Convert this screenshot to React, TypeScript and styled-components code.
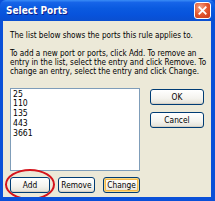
import React from "react";
import styled, { createGlobalStyle } from "styled-components";

const Global = createGlobalStyle`
  html, body { margin: 0; padding: 0; background: #ECE9D8; }
  body { width: 215px; height: 201px; overflow: hidden; }
`;

const Window = styled.div`
  width: 215px;
  height: 201px;
  box-sizing: border-box;
  display: flex;
  flex-direction: column;
  background: #0a50d8;
  font-family: "DejaVu Sans Condensed", "DejaVu Sans", sans-serif;
`;

const TitleBar = styled.div`
  height: 21px;
  flex: none;
  display: flex;
  align-items: center;
  justify-content: space-between;
  padding: 0 4px 0 6px;
  background: linear-gradient(
    to bottom,
    #3a8cf6 0%,
    #1664e8 12%,
    #0a5ae0 40%,
    #0853dc 70%,
    #0a4fd0 100%
  );
  border-radius: 6px 6px 0 0;
`;

const Title = styled.span`
  color: #fff;
  font-weight: bold;
  font-size: 10px;
  text-shadow: 1px 1px 0 #0a1e8a;
`;

const CloseBtn = styled.div`
  width: 17px;
  height: 17px;
  box-sizing: border-box;
  border: 1px solid #fff;
  border-radius: 3px;
  background: radial-gradient(circle at 35% 30%, #f5a48a 0%, #e2552c 50%, #c8381a 100%);
  display: flex;
  align-items: center;
  justify-content: center;
`;

const Frame = styled.div`
  flex: 1;
  display: flex;
  padding: 0 4px 4px 3px;
  min-height: 0;
`;

const Body = styled.div`
  flex: 1;
  background: #ECE9D8;
  padding: 10px 7px 0 7px;
  display: flex;
  flex-direction: column;
  color: #000;
  font-size: 8.1px;
  line-height: 9.3px;
  overflow: hidden;
`;

const Para = styled.p<{ $mb: number }>`
  margin: 0 0 ${(p) => p.$mb}px 0;
  white-space: nowrap;
`;

const Middle = styled.div`
  display: flex;
  gap: 10px;
`;

const ListBox = styled.div`
  width: 131px;
  height: 83px;
  box-sizing: border-box;
  background: #fff;
  border: 1px solid #7f9db9;
  padding: 1px 2px;
  font-size: 8.6px;
  line-height: 9.8px;
`;

const Item = styled.div``;

const SideButtons = styled.div`
  display: flex;
  flex-direction: column;
  gap: 7px;
  padding-top: 1px;
`;

const Button = styled.button<{ $w: number; $hot?: boolean }>`
  width: ${(p) => p.$w}px;
  height: 16px;
  box-sizing: border-box;
  border: 1px solid #003c74;
  border-radius: 3px;
  background: linear-gradient(to bottom, #ffffff 0%, #f4f3ee 60%, #e3e1d6 100%);
  font-family: inherit;
  font-size: 8.3px;
  color: #000;
  padding: 0;
  box-shadow: ${(p) =>
    p.$hot
      ? "inset 0 0 0 1px #f9d884, inset 0 0 0 2px #f3b94b"
      : "inset 0 -1px 0 #d6d0c5"};
`;

const Bottom = styled.div`
  display: flex;
  gap: 8px;
  margin-top: 6px;
  position: relative;
`;

const Circle = styled.div`
  position: absolute;
  left: -5px;
  top: -8px;
  width: 50px;
  height: 31px;
  border: 2px solid #d4141c;
  border-radius: 50%;
  box-sizing: border-box;
  pointer-events: none;
`;

export default function App() {
  const ports = ["25", "110", "135", "443", "3661"];
  return (
    <>
      <Global />
      <Window>
        <TitleBar>
          <Title>Select Ports</Title>
          <CloseBtn>
            <svg width="9" height="9" viewBox="0 0 10 10">
              <path d="M1.5 1.5 L8.5 8.5 M8.5 1.5 L1.5 8.5" stroke="#fff" strokeWidth="2" strokeLinecap="square" />
            </svg>
          </CloseBtn>
        </TitleBar>
        <Frame>
          <Body>
            <Para $mb={8.5}>The list below shows the ports this rule applies to.</Para>
            <Para $mb={11}>
              To add a new port or ports, click Add. To remove an
              <br />
              entry in the list, select the entry and click Remove. To
              <br />
              change an entry, select the entry and click Change.
            </Para>
            <Middle>
              <ListBox>
                {ports.map((p) => (
                  <Item key={p}>{p}</Item>
                ))}
              </ListBox>
              <SideButtons>
                <Button $w={54}>OK</Button>
                <Button $w={54}>Cancel</Button>
              </SideButtons>
            </Middle>
            <Bottom>
              <Circle />
              <Button $w={40}>Add</Button>
              <Button $w={37}>Remove</Button>
              <Button $w={37} $hot>
                Change
              </Button>
            </Bottom>
          </Body>
        </Frame>
      </Window>
    </>
  );
}
